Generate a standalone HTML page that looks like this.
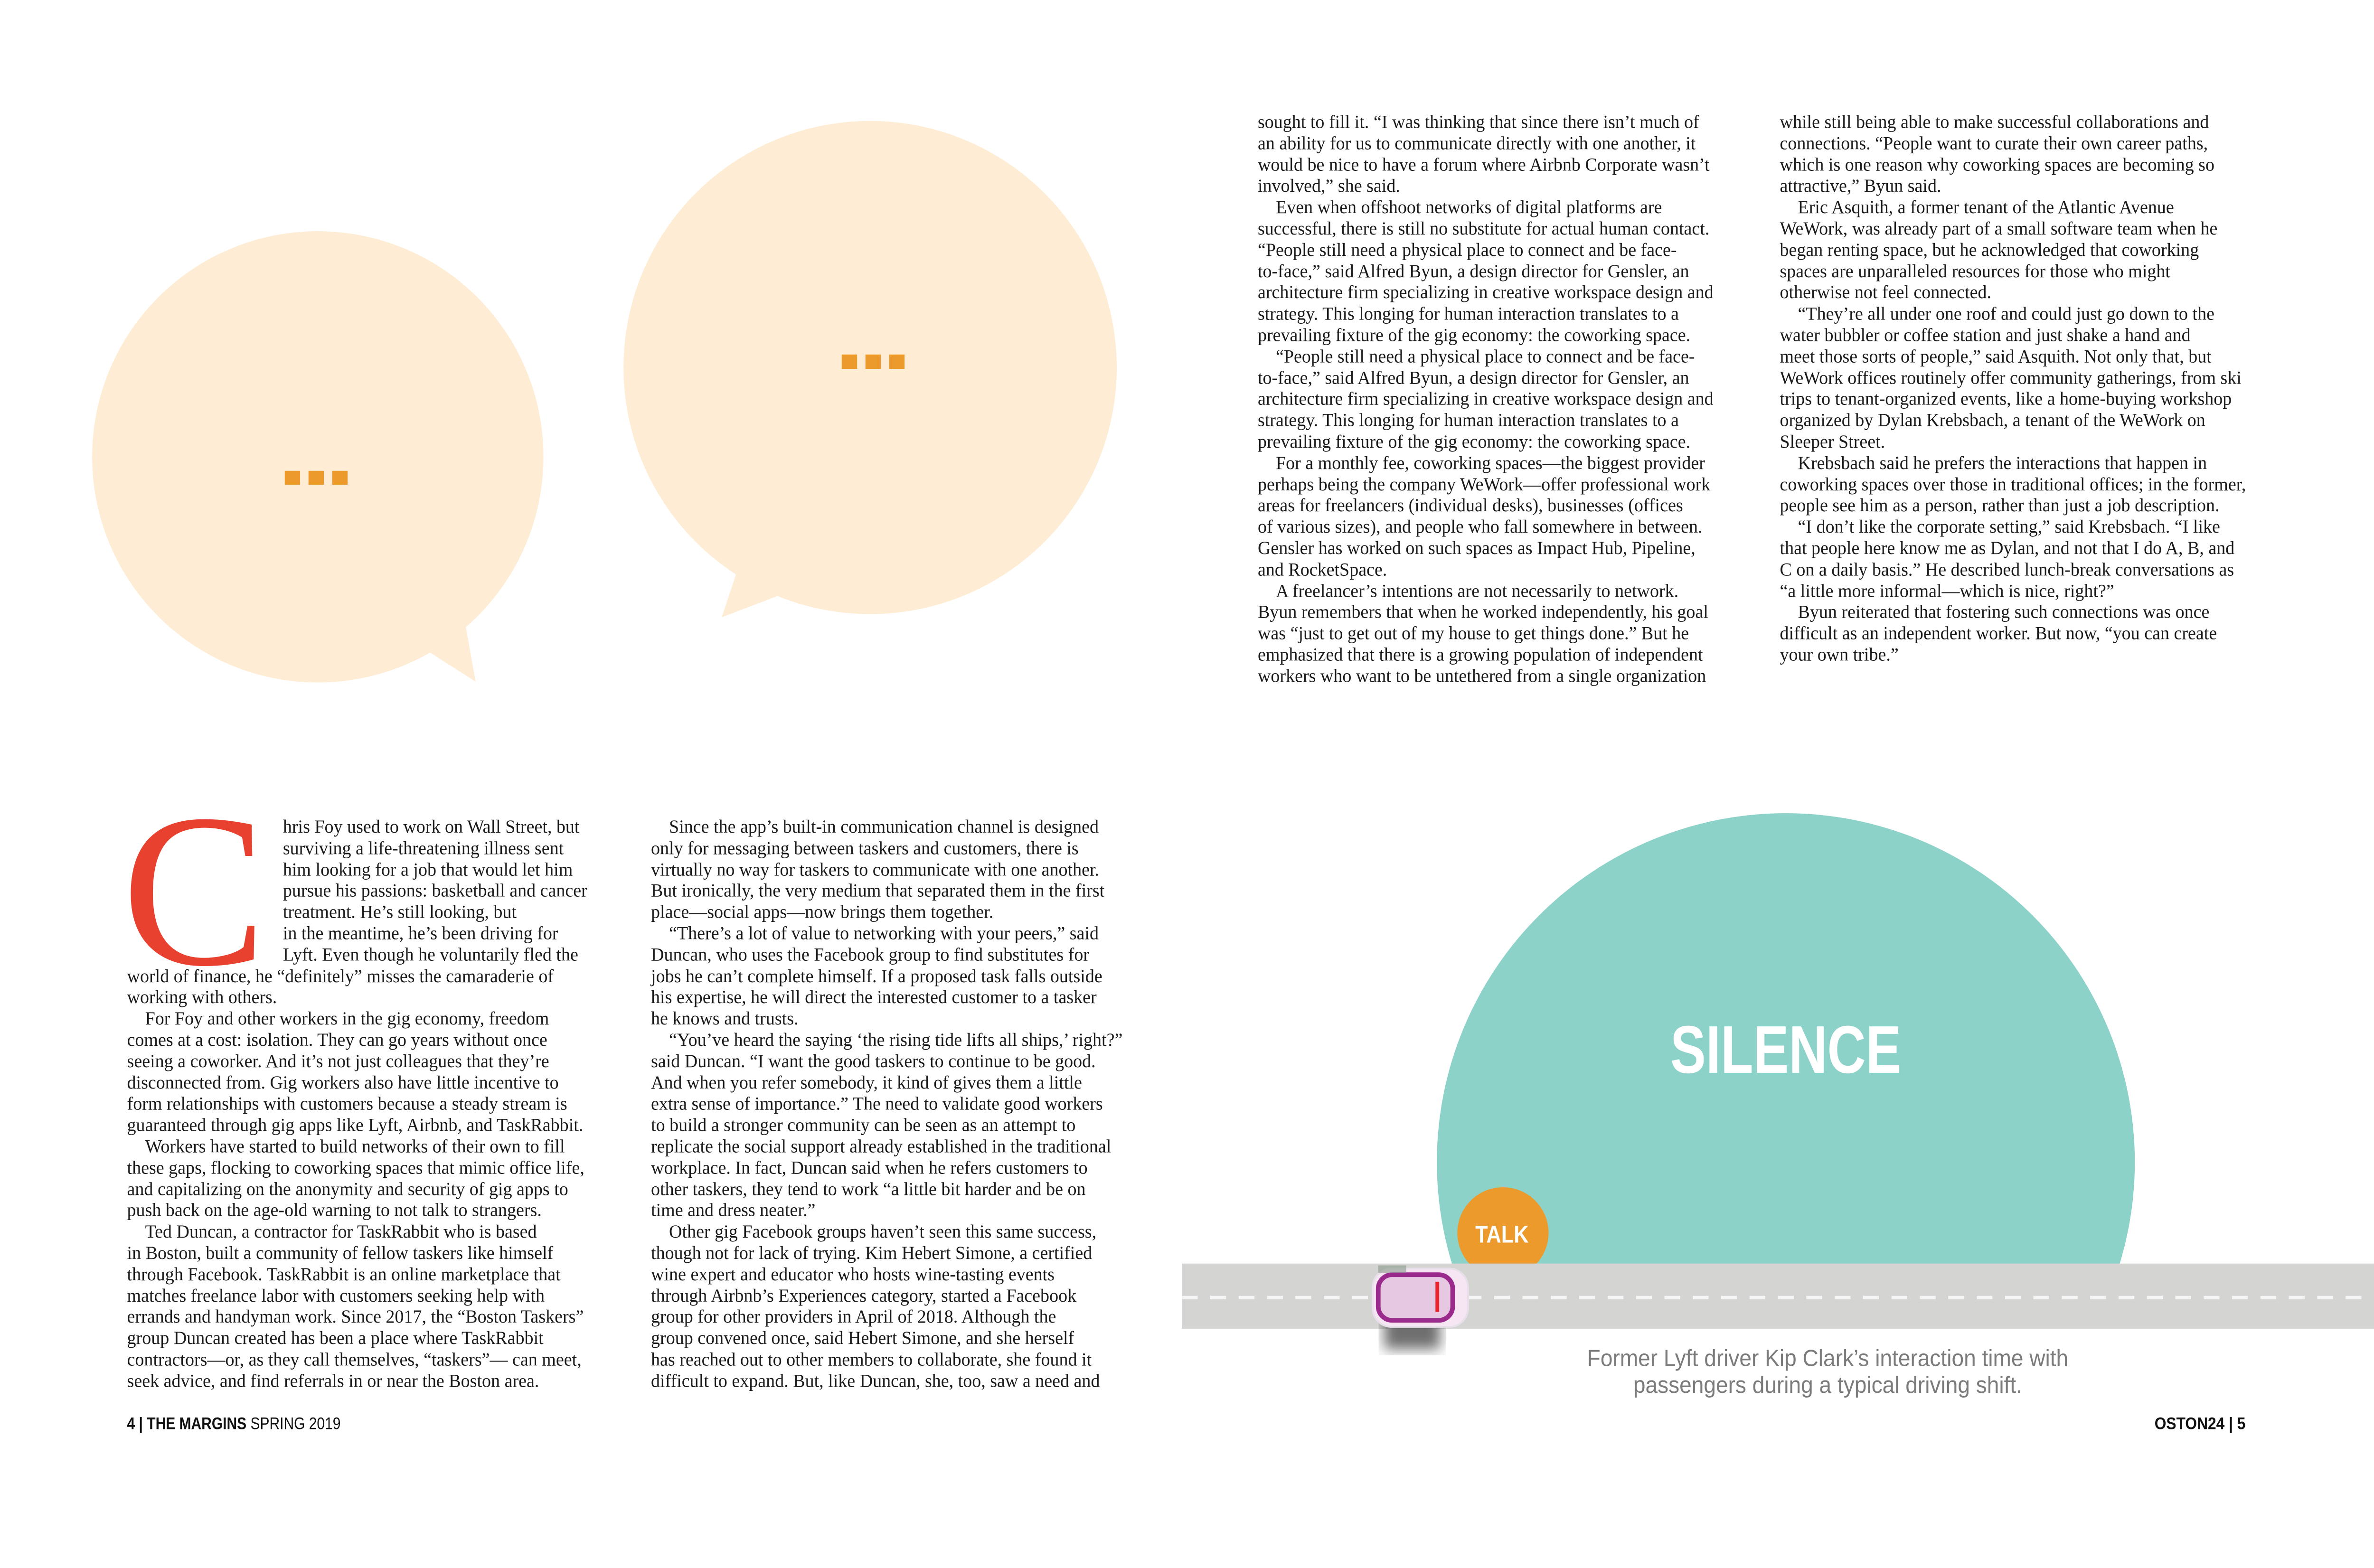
<!DOCTYPE html>
<html><head><meta charset="utf-8"><style>
html,body{margin:0;padding:0;background:#fff;}
body{width:5100px;height:3300px;position:relative;overflow:hidden;font-family:"Liberation Serif",serif;color:#1a1a1a;}
#w{position:absolute;left:0;top:0;width:5200px;height:3370px;transform:scale(0.98);transform-origin:0 0;}
.col{position:absolute;font-size:40px;line-height:45.8px;transform:scaleX(0.97);transform-origin:0 0;white-space:nowrap;}
.col div{height:45.8px;}
.i{padding-left:40px;}
svg{position:absolute;left:0;top:0;}
</style></head><body><div id="w">
<svg width="5200" height="3370" viewBox="0 0 5200 3370">
 <g fill="#feedd4">
  <circle cx="683" cy="982" r="485"/>
  <polygon points="920,1400 1022,1465 998,1330"/>
  <circle cx="1870" cy="790" r="530"/>
  <polygon points="1551,1327 1600,1180 1700,1270"/>
 </g>
 <g fill="#ec9a2b">
  <rect x="612" y="1012" width="33" height="30"/><rect x="663" y="1012" width="33" height="30"/><rect x="714" y="1012" width="33" height="30"/>
  <rect x="1809" y="762" width="33" height="31"/><rect x="1860" y="762" width="33" height="31"/><rect x="1911" y="762" width="33" height="31"/>
 </g>
 <defs><clipPath id="cp"><rect x="0" y="0" width="5200" height="2717"/></clipPath>
 <filter id="bl"><feGaussianBlur stdDeviation="14"/></filter></defs>
 <circle cx="3838" cy="2498" r="750" fill="#8dd2c9" clip-path="url(#cp)"/>
 <circle cx="3230" cy="2650" r="98" fill="#ec9a2b" clip-path="url(#cp)"/>
 <rect x="2540" y="2716" width="2660" height="140" fill="#d4d4d3"/>
 <line x1="2540" y1="2789" x2="5200" y2="2789" stroke="#f4f4f4" stroke-width="7" stroke-dasharray="34,27"/>
 <rect x="2975" y="2770" width="120" height="130" fill="#333" opacity="0.7" filter="url(#bl)"/>
 <rect x="2950" y="2727" width="205" height="125" rx="40" fill="#f6e6f4" stroke="#e8e0e8" stroke-width="4"/>
 <rect x="2962" y="2740" width="160" height="98" rx="30" fill="#e6c8e2" stroke="#9a2a8c" stroke-width="10"/>
 <rect x="3085" y="2755" width="8" height="65" fill="#e8242c"/>
 <rect x="2962" y="2720" width="60" height="16" fill="#8a9a8a" opacity="0.6"/>
 <text x="3838" y="2306" text-anchor="middle" font-family="Liberation Sans" font-weight="bold" font-size="145" fill="#fff" transform="translate(3838 0) scale(0.79 1) translate(-3838 0)">SILENCE</text>
 <text x="3228" y="2671" text-anchor="middle" font-family="Liberation Sans" font-weight="bold" font-size="52" fill="#fff" transform="translate(3228 0) scale(0.85 1) translate(-3228 0)">TALK</text>
 <text x="3928" y="2936" text-anchor="middle" font-family="Liberation Sans" font-size="50" fill="#7b7b7b" transform="translate(3928 0) scale(0.94 1) translate(-3928 0)">Former Lyft driver Kip Clark’s interaction time with</text>
 <text x="3928" y="2994" text-anchor="middle" font-family="Liberation Sans" font-size="50" fill="#7b7b7b" transform="translate(3928 0) scale(0.94 1) translate(-3928 0)">passengers during a typical driving shift.</text>
 <text x="273" y="3072" font-family="Liberation Sans" font-size="36" fill="#111" transform="translate(273 0) scale(0.85 1) translate(-273 0)"><tspan font-weight="bold">4 | THE MARGINS</tspan> SPRING 2019</text>
 <text x="4826" y="3072" text-anchor="end" font-family="Liberation Sans" font-weight="bold" font-size="36" fill="#111" transform="translate(4826 0) scale(0.9 1) translate(-4826 0)">OSTON24 | 5</text>
 <text x="262" y="2072" font-family="Liberation Serif" font-size="470" fill="#e8412f" transform="translate(262 0) scale(0.99 1) translate(-262 0)">C</text>
</svg>

<div class="col" style="left:2703px;top:239px;">
<div>sought to fill it. “I was thinking that since there isn’t much of</div>
<div>an ability for us to communicate directly with one another, it</div>
<div>would be nice to have a forum where Airbnb Corporate wasn’t</div>
<div>involved,” she said.</div>
<div class="i">Even when offshoot networks of digital platforms are</div>
<div>successful, there is still no substitute for actual human contact.</div>
<div>“People still need a physical place to connect and be face-</div>
<div>to-face,” said Alfred Byun, a design director for Gensler, an</div>
<div>architecture firm specializing in creative workspace design and</div>
<div>strategy. This longing for human interaction translates to a</div>
<div>prevailing fixture of the gig economy: the coworking space.</div>
<div class="i">“People still need a physical place to connect and be face-</div>
<div>to-face,” said Alfred Byun, a design director for Gensler, an</div>
<div>architecture firm specializing in creative workspace design and</div>
<div>strategy. This longing for human interaction translates to a</div>
<div>prevailing fixture of the gig economy: the coworking space.</div>
<div class="i">For a monthly fee, coworking spaces—the biggest provider</div>
<div>perhaps being the company WeWork—offer professional work</div>
<div>areas for freelancers (individual desks), businesses (offices</div>
<div>of various sizes), and people who fall somewhere in between.</div>
<div>Gensler has worked on such spaces as Impact Hub, Pipeline,</div>
<div>and RocketSpace.</div>
<div class="i">A freelancer’s intentions are not necessarily to network.</div>
<div>Byun remembers that when he worked independently, his goal</div>
<div>was “just to get out of my house to get things done.” But he</div>
<div>emphasized that there is a growing population of independent</div>
<div>workers who want to be untethered from a single organization</div>
</div>

<div class="col" style="left:3825px;top:239px;">
<div>while still being able to make successful collaborations and</div>
<div>connections. “People want to curate their own career paths,</div>
<div>which is one reason why coworking spaces are becoming so</div>
<div>attractive,” Byun said.</div>
<div class="i">Eric Asquith, a former tenant of the Atlantic Avenue</div>
<div>WeWork, was already part of a small software team when he</div>
<div>began renting space, but he acknowledged that coworking</div>
<div>spaces are unparalleled resources for those who might</div>
<div>otherwise not feel connected.</div>
<div class="i">“They’re all under one roof and could just go down to the</div>
<div>water bubbler or coffee station and just shake a hand and</div>
<div>meet those sorts of people,” said Asquith. Not only that, but</div>
<div>WeWork offices routinely offer community gatherings, from ski</div>
<div>trips to tenant-organized events, like a home-buying workshop</div>
<div>organized by Dylan Krebsbach, a tenant of the WeWork on</div>
<div>Sleeper Street.</div>
<div class="i">Krebsbach said he prefers the interactions that happen in</div>
<div>coworking spaces over those in traditional offices; in the former,</div>
<div>people see him as a person, rather than just a job description.</div>
<div class="i">“I don’t like the corporate setting,” said Krebsbach. “I like</div>
<div>that people here know me as Dylan, and not that I do A, B, and</div>
<div>C on a daily basis.” He described lunch-break conversations as</div>
<div>“a little more informal—which is nice, right?”</div>
<div class="i">Byun reiterated that fostering such connections was once</div>
<div>difficult as an independent worker. But now, “you can create</div>
<div>your own tribe.”</div>
</div>

<div class="col" style="left:608px;top:1754px;">
<div>hris Foy used to work on Wall Street, but</div>
<div>surviving a life-threatening illness sent</div>
<div>him looking for a job that would let him</div>
<div>pursue his passions: basketball and cancer</div>
<div>treatment. He’s still looking, but</div>
<div>in the meantime, he’s been driving for</div>
<div>Lyft. Even though he voluntarily fled the</div>
</div>

<div class="col" style="left:273px;top:2074.6px;">
<div>world of finance, he “definitely” misses the camaraderie of</div>
<div>working with others.</div>
<div class="i">For Foy and other workers in the gig economy, freedom</div>
<div>comes at a cost: isolation. They can go years without once</div>
<div>seeing a coworker. And it’s not just colleagues that they’re</div>
<div>disconnected from. Gig workers also have little incentive to</div>
<div>form relationships with customers because a steady stream is</div>
<div>guaranteed through gig apps like Lyft, Airbnb, and TaskRabbit.</div>
<div class="i">Workers have started to build networks of their own to fill</div>
<div>these gaps, flocking to coworking spaces that mimic office life,</div>
<div>and capitalizing on the anonymity and security of gig apps to</div>
<div>push back on the age-old warning to not talk to strangers.</div>
<div class="i">Ted Duncan, a contractor for TaskRabbit who is based</div>
<div>in Boston, built a community of fellow taskers like himself</div>
<div>through Facebook. TaskRabbit is an online marketplace that</div>
<div>matches freelance labor with customers seeking help with</div>
<div>errands and handyman work. Since 2017, the “Boston Taskers”</div>
<div>group Duncan created has been a place where TaskRabbit</div>
<div>contractors—or, as they call themselves, “taskers”— can meet,</div>
<div>seek advice, and find referrals in or near the Boston area.</div>
</div>

<div class="col" style="left:1399px;top:1754px;">
<div class="i">Since the app’s built-in communication channel is designed</div>
<div>only for messaging between taskers and customers, there is</div>
<div>virtually no way for taskers to communicate with one another.</div>
<div>But ironically, the very medium that separated them in the first</div>
<div>place—social apps—now brings them together.</div>
<div class="i">“There’s a lot of value to networking with your peers,” said</div>
<div>Duncan, who uses the Facebook group to find substitutes for</div>
<div>jobs he can’t complete himself. If a proposed task falls outside</div>
<div>his expertise, he will direct the interested customer to a tasker</div>
<div>he knows and trusts.</div>
<div class="i">“You’ve heard the saying ‘the rising tide lifts all ships,’ right?”</div>
<div>said Duncan. “I want the good taskers to continue to be good.</div>
<div>And when you refer somebody, it kind of gives them a little</div>
<div>extra sense of importance.” The need to validate good workers</div>
<div>to build a stronger community can be seen as an attempt to</div>
<div>replicate the social support already established in the traditional</div>
<div>workplace. In fact, Duncan said when he refers customers to</div>
<div>other taskers, they tend to work “a little bit harder and be on</div>
<div>time and dress neater.”</div>
<div class="i">Other gig Facebook groups haven’t seen this same success,</div>
<div>though not for lack of trying. Kim Hebert Simone, a certified</div>
<div>wine expert and educator who hosts wine-tasting events</div>
<div>through Airbnb’s Experiences category, started a Facebook</div>
<div>group for other providers in April of 2018. Although the</div>
<div>group convened once, said Hebert Simone, and she herself</div>
<div>has reached out to other members to collaborate, she found it</div>
<div>difficult to expand. But, like Duncan, she, too, saw a need and</div>
</div>
</div></body></html>
